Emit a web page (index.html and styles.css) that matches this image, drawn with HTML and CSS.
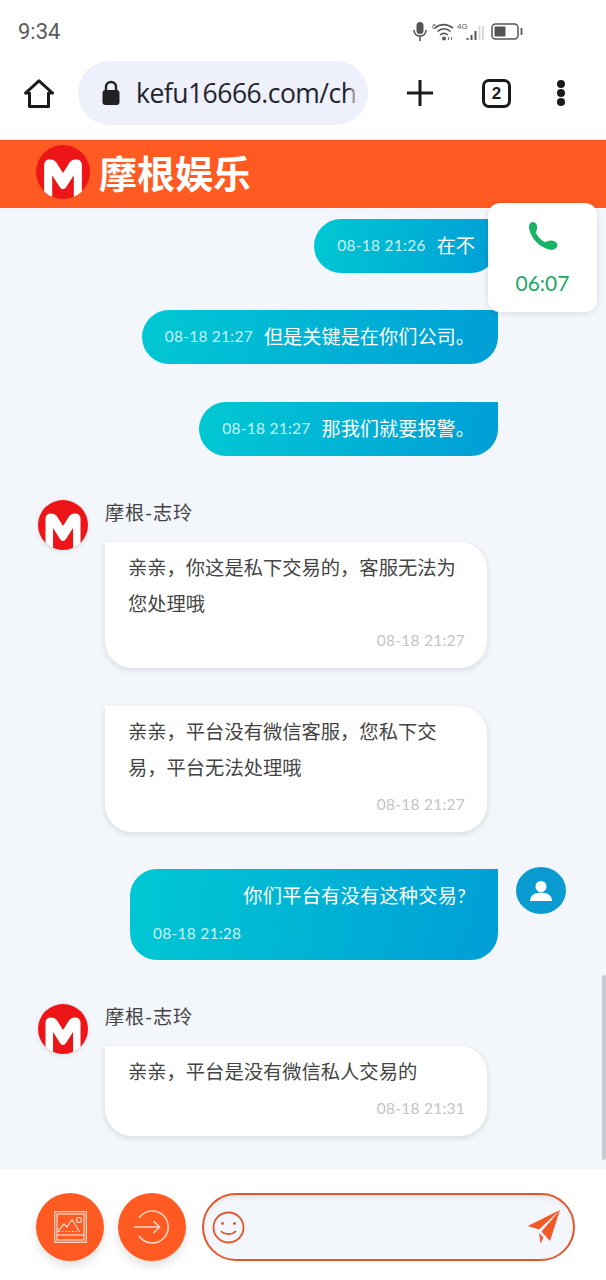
FILE: index.html
```html
<!DOCTYPE html>
<html lang="zh">
<head>
<meta charset="utf-8">
<title>摩根娱乐</title>
<link rel="stylesheet" href="styles.css">
</head>
<body>
<svg class="defs" width="0" height="0" aria-hidden="true">
  <symbol id="logo" viewBox="0 0 50 50">
    <circle cx="25" cy="25" r="25" fill="#ee1518"/>
    <path d="M7.500 43V19C7.500 15 10 13.500 13 13.500C16 13.500 18 14.500 20 18L25 26L30 18C32 14.500 34 13.500 37 13.500C40 13.500 42.500 15 42.500 19V43A25 25 0 0 1 35 48V28L28 39C26.500 41.500 23.500 41.500 22 39L15 28V48A25 25 0 0 1 7.500 43Z" fill="#fff"/>
  </symbol>
</svg>

<div class="status">
  <span class="clock">9:34</span>
  <div class="status-icons">
    <svg width="14" height="19" viewBox="0 0 14 19"><rect x="3.500" y="0" width="7" height="12" rx="3.500" fill="#555"/><path d="M1 8c0 3.500 2.500 6 6 6s6-2.500 6-6M7 14v5" fill="none" stroke="#555" stroke-width="1.600"/></svg>
    <svg class="wifi" width="22" height="20" viewBox="0 0 22 20"><text x="0" y="7" class="tiny">6</text><path d="M3 6c5-4.500 12-4.500 18 0M5.500 9.500c4-3.500 9-3.500 13 0M8 13c2.500-2 5.500-2 8 0" fill="none" stroke="#555" stroke-width="1.600"/><circle cx="12" cy="16.500" r="2" fill="#555"/><path d="M16.500 18v-3M19.500 18v-3" stroke="#777" stroke-width="1.200"/></svg>
    <svg class="signal" width="28" height="20" viewBox="0 0 28 20"><text x="0" y="7" class="tiny">4G</text><path d="M10.500 18v-2M14.500 18v-5M18.500 18v-9" stroke="#555" stroke-width="2"/><path d="M22.500 18V4M26 18V4" stroke="#d4d4d4" stroke-width="1.800"/></svg>
    <svg class="battery" width="32" height="17" viewBox="0 0 32 17"><rect x="1" y="1" width="26" height="15" rx="3.500" fill="none" stroke="#555" stroke-width="1.500"/><rect x="3.500" y="3.500" width="11" height="10" rx="1" fill="#555"/><path d="M30.500 5v7" stroke="#555" stroke-width="1.800"/></svg>
  </div>
</div>

<div class="toolbar">
  <svg class="home" width="30" height="29" viewBox="0 0 30 29"><path d="M1.500 14L15 1.800L28.500 14H24.500V27.500H5.500V14Z" fill="none" stroke="#1a1a1a" stroke-width="3" stroke-linejoin="round"/></svg>
  <div class="omnibox">
    <svg class="lock" width="20" height="26" viewBox="0 0 20 26"><path d="M5 11V7a5 5 0 0 1 10 0v4" fill="none" stroke="#222" stroke-width="2.400"/><rect x="1.500" y="10" width="17" height="15" rx="3" fill="#222"/></svg>
    <span class="url">kefu16666.com/ch</span>
  </div>
  <svg class="plus" width="26" height="26" viewBox="0 0 26 26"><path d="M13 0v26M0 13h26" stroke="#1a1a1a" stroke-width="3"/></svg>
  <div class="tabs">2</div>
  <div class="kebab"><i></i><i></i><i></i></div>
</div>

<header class="brand">
  <svg class="brand-logo" width="54" height="54"><use href="#logo"/></svg>
  <span class="brand-name">摩根娱乐</span>
</header>

<main class="chat">
  <div class="row-out"><div class="out-inline"><span class="time">08-18 21:26</span><span class="msg">在不</span></div></div>
  <div class="row-out"><div class="out-inline"><span class="time">08-18 21:27</span><span class="msg">但是关键是在你们公司。</span></div></div>
  <div class="row-out"><div class="out-inline"><span class="time">08-18 21:27</span><span class="msg">那我们就要报警。</span></div></div>

  <section class="thread first-thread">
    <svg class="avatar" width="50" height="50"><use href="#logo"/></svg>
    <div class="thread-body">
      <div class="name">摩根-志玲</div>
      <div class="bubble-in">
        <p class="in-text">亲亲，你这是私下交易的，客服无法为您处理哦</p>
        <div class="in-time">08-18 21:27</div>
      </div>
      <div class="bubble-in second">
        <p class="in-text">亲亲，平台没有微信客服，您私下交易，平台无法处理哦</p>
        <div class="in-time">08-18 21:27</div>
      </div>
    </div>
  </section>

  <div class="row-me">
    <div class="bubble-me">
      <div class="me-text">你们平台有没有这种交易?</div>
      <div class="me-time">08-18 21:28</div>
    </div>
    <div class="me-avatar">
      <svg width="26" height="26" viewBox="0 0 26 26"><circle cx="13" cy="8.500" r="5.500" fill="#fff"/><path d="M2 23c0-5 4-8.500 11-8.500S24 18 24 23Z" fill="#fff"/></svg>
    </div>
  </div>

  <section class="thread last-thread">
    <svg class="avatar" width="50" height="50"><use href="#logo"/></svg>
    <div class="thread-body">
      <div class="name">摩根-志玲</div>
      <div class="bubble-in">
        <p class="in-text">亲亲，平台是没有微信私人交易的</p>
        <div class="in-time">08-18 21:31</div>
      </div>
    </div>
  </section>

  <div class="scrollbar"></div>
</main>

<aside class="call">
  <svg width="32" height="32" viewBox="0 0 30 30"><path d="M2 7C1.500 4 3 1 5.500 1C8 1 9.500 3 9.500 6C9.500 8 9 9 8 10.500C10 14.500 13 18 17 20C19 19 21 18 24 18.500C27 19 29 21 28.500 23C28 26 25 27.500 22 27C12 25 4 17 2 7Z" fill="#16b364"/></svg>
  <span class="call-time">06:07</span>
</aside>

<footer class="composer">
  <button class="round-btn" aria-label="图片">
    <svg width="33" height="32" viewBox="0 0 33 32" fill="none" stroke="#fbdccd" stroke-width="1.200"><rect x="0.700" y="0.700" width="31.600" height="30.600"/><rect x="3" y="3" width="27" height="26"/><path d="M4 20L10 13L13 16L18 8.500L25 20"/><path d="M4 20.500h22" stroke-dasharray="2 1.500"/><path d="M3 24h27"/><circle cx="25" cy="9" r="2.500"/></svg>
  </button>
  <button class="round-btn" aria-label="退出">
    <svg width="36" height="36" viewBox="0 0 36 36" fill="none" stroke="#fbdccd" stroke-width="1.500"><path d="M5 9A16 16 0 1 1 5 27"/><path d="M0 18H25.500M19.500 12L25.500 18L19.500 24"/></svg>
  </button>
  <div class="input">
    <svg width="33" height="33" viewBox="0 0 33 33" fill="none" stroke="#e4552a" stroke-width="1.800"><circle cx="16.500" cy="16.500" r="15"/><path d="M9 20c3.500 4 11.500 4 15 0"/><circle cx="10.500" cy="12.500" r="1.400" fill="#e4552a" stroke="none"/><circle cx="22.500" cy="12.500" r="1.400" fill="#e4552a" stroke="none"/></svg>
    <svg width="33" height="34" viewBox="0 0 33 34"><path d="M33 0L0.700 16L12 19.500ZM33 0L14.500 21.500L23 31ZM12 23L16.500 27.500L13.500 33.500Z" fill="#f05a28"/></svg>
  </div>
</footer>
</body>
</html>
```
FILE: styles.css
```css
* { box-sizing: border-box; }
html, body { margin: 0; padding: 0; }
body {
  position: relative;
  width: 606px;
  height: 1280px;
  overflow: hidden;
  background: #fff;
  font-family: Lato, "Noto Sans CJK SC", sans-serif;
  color: #333;
}
.defs { position: absolute; }

.status {
  height: 61px;
  display: flex;
  align-items: center;
  justify-content: space-between;
  padding: 2px 83px 0 18px;
}
.clock { font: 22px Roboto, sans-serif; color: #5c5c5c; }
.status-icons { display: flex; align-items: center; }
.wifi { margin-left: 5px; }
.signal { margin-left: 3px; }
.tiny { font: 8px "Liberation Sans", sans-serif; fill: #555; }
.battery { margin-left: 6px; }

.toolbar {
  height: 78px;
  display: flex;
  align-items: flex-start;
  padding: 0 0 0 24px;
}
.home { margin-top: 18px; flex: none; }
.omnibox {
  position: relative;
  width: 290px;
  height: 64px;
  margin-left: 24px;
  padding-left: 23px;
  display: flex;
  align-items: center;
  gap: 15px;
  background: #eef0fb;
  border-radius: 32px;
  flex: none;
}
.omnibox::after {
  content: "";
  position: absolute;
  top: 14px;
  bottom: 14px;
  right: 8px;
  width: 12px;
  background: linear-gradient(90deg, rgba(238,240,251,0), #eef0fb 85%);
}
.lock { flex: none; }
.url {
  font: 26.500px "Open Sans", sans-serif;
  letter-spacing: -0.5px;
  color: #22252c;
  white-space: nowrap;
}
.plus { margin: 19px 0 0 39px; flex: none; }
.tabs {
  width: 29px;
  height: 29px;
  margin: 18px 0 0 49px;
  border: 3px solid #1a1a1a;
  border-radius: 7px;
  font: bold 17px/23px "Liberation Sans", sans-serif;
  text-align: center;
  color: #1a1a1a;
  flex: none;
}
.kebab {
  margin: 19px 0 0 46px;
  display: flex;
  flex-direction: column;
  gap: 1px;
  flex: none;
}
.kebab i { width: 8px; height: 8px; border-radius: 50%; background: #1a1a1a; }

.brand {
  height: 69px;
  padding: 5px 0 0 36px;
  display: flex;
  align-items: flex-start;
  gap: 9px;
  background: #ff5a22;
  border-top: 1px solid #f3e6dc;
  box-shadow: 0 2px 3px rgba(0,0,0,.08);
  position: relative;
}
.brand-name {
  font: bold 38px/54px "Noto Sans CJK SC", sans-serif;
  color: #fff;
}

.chat {
  height: 961px;
  background: #f3f6fb;
  padding-top: 11px;
  position: relative;
  overflow: hidden;
}
.row-out { display: flex; justify-content: flex-end; padding-right: 108px; margin-bottom: 37px; }
.row-out + .row-out { margin-bottom: 38px; }
.out-inline {
  height: 54px;
  padding: 0 23px 3px 23px;
  display: flex;
  align-items: center;
  gap: 11px;
  color: #fff;
  background: linear-gradient(100deg, #00c8d3, #009ed6);
  border-radius: 27px 0 27px 27px;
}
.time { font-size: 15.500px; color: #c9f1f5; letter-spacing: 0.25px; }
.msg { font-size: 19.200px; white-space: nowrap; }

.thread { display: flex; padding-left: 38px; }
.first-thread { margin-top: 44px; }
.last-thread { margin-top: 44px; }
.avatar { flex: none; filter: drop-shadow(0 1px 2px rgba(0,0,0,.12)); }
.thread-body { margin-left: 17px; width: 382px; }
.name { font-size: 19.200px; line-height: 26px; letter-spacing: 0.8px; color: #444; }
.bubble-in {
  margin-top: 16px;
  padding: 8px 22px 17px 23px;
  background: #fff;
  border-radius: 0 27px 27px 27px;
  box-shadow: 0 2px 6px rgba(0,0,0,.12);
}
.second { margin-top: 38px; }
.in-text { margin: 0; font-size: 19.300px; line-height: 36px; color: #444; }
.in-time { margin-top: 7px; font-size: 15.500px; line-height: 22px; letter-spacing: 0.25px; color: #c4c4c4; text-align: right; }

.row-me { display: flex; align-items: flex-start; margin-top: 37px; padding-left: 130px; }
.bubble-me {
  width: 368px;
  height: 91px;
  padding: 12px 32px 0 23px;
  color: #fff;
  background: linear-gradient(100deg, #00c8d3, #009ed6);
  border-radius: 27px 0 27px 27px;
}
.me-text { font-size: 19.200px; line-height: 30px; letter-spacing: 0.25px; text-align: right; white-space: nowrap; }
.me-time { margin-top: 11px; font-size: 15.500px; line-height: 22px; letter-spacing: 0.25px; color: #c9f1f5; }
.me-avatar {
  width: 50px;
  height: 47px;
  margin: -2px 0 0 18px;
  display: flex;
  align-items: center;
  justify-content: center;
  border-radius: 50%;
  background: #0a9bd0;
}

.scrollbar {
  position: absolute;
  top: 767px;
  right: 0;
  width: 4px;
  height: 185px;
  background: #c8ccd2;
  border-radius: 2px;
}

.call {
  position: absolute;
  left: 488px;
  top: 203px;
  width: 109px;
  height: 109px;
  padding-top: 18px;
  display: flex;
  flex-direction: column;
  align-items: center;
  gap: 17px;
  background: #fff;
  border-radius: 12px;
  box-shadow: 0 1px 6px rgba(0,0,0,.12);
}
.call-time { font-size: 21px; line-height: 26px; color: #22a866; }

.composer {
  height: 111px;
  padding: 24px 0 0 36px;
  display: flex;
  align-items: flex-start;
  gap: 14px;
  background: #fff;
}
.round-btn {
  width: 68px;
  height: 68px;
  padding: 0;
  border: 0;
  border-radius: 50%;
  display: flex;
  align-items: center;
  justify-content: center;
  background: #ff5a22;
  box-shadow: 0 5px 10px rgba(0,0,0,.12);
  flex: none;
}
.input {
  width: 373px;
  height: 68px;
  margin-left: 2px;
  padding: 0 13px 0 8px;
  display: flex;
  align-items: center;
  justify-content: space-between;
  background: #f3f6fb;
  border: 2px solid #e4552a;
  border-radius: 34px;
  box-shadow: inset 0 6px 8px -6px rgba(0,0,0,.1);
}
```
